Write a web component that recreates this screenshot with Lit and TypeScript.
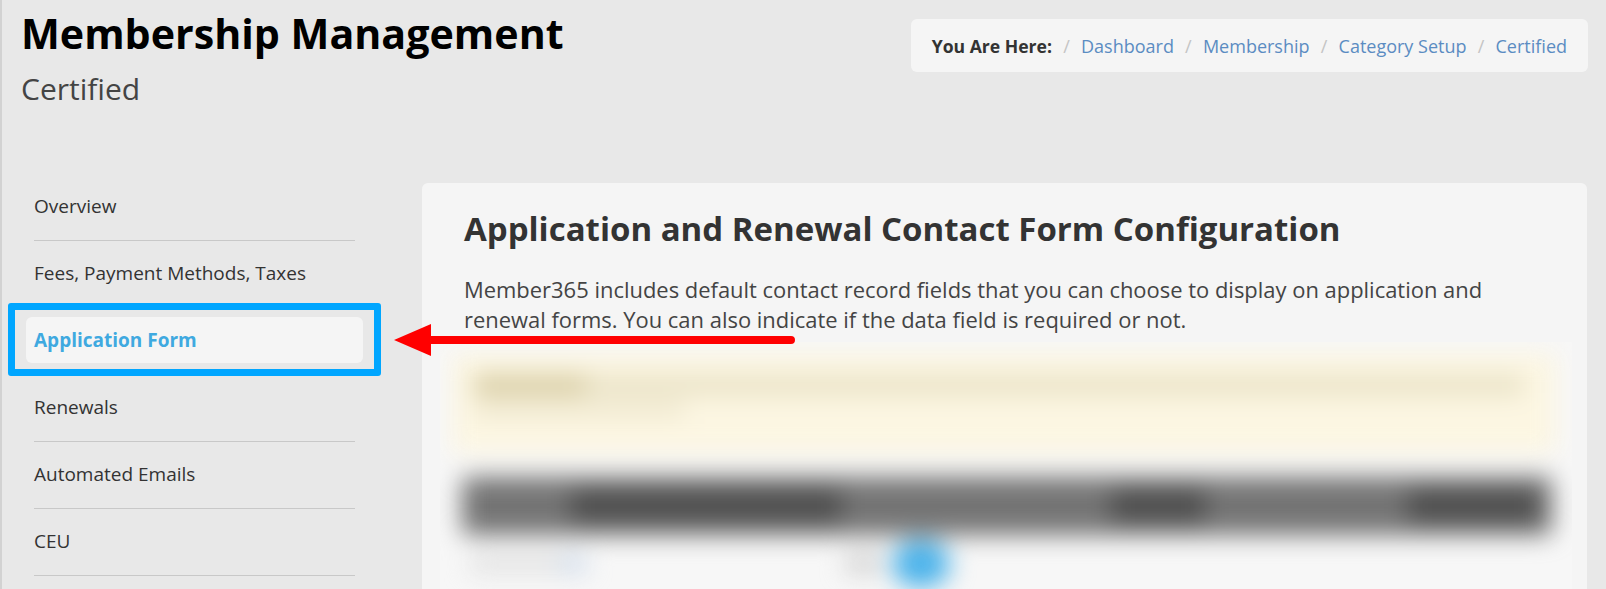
import { LitElement, html, css, svg } from "lit";
import { customElement } from "lit/decorators.js";

const NAV = ["Overview", "Fees, Payment Methods, Taxes", "Application Form", "Renewals", "Automated Emails", "CEU"];
const CRUMBS = ["Dashboard", "Membership", "Category Setup", "Certified"];

@customElement("app-root")
export class AppRoot extends LitElement {
  static styles = css`
    :host {
      display: block;
      position: relative;
      width: 1606px;
      height: 589px;
      overflow: hidden;
      box-sizing: border-box;
      background: #e8e8e8;
      border-left: 2px solid #d2d2d2;
      font-family: "Open Sans", "Noto Sans", sans-serif;
      color: #333;
    }
    .header {
      display: flex;
      justify-content: space-between;
      align-items: flex-start;
      height: 174px;
      padding: 0 18px 0 19px;
      box-sizing: border-box;
    }
    h1 {
      margin: 5px 0 0;
      font-size: 41.2px;
      line-height: 57px;
      font-weight: 700;
      color: #000;
    }
    .sub {
      margin: 6px 0 0;
      font-size: 30px;
      line-height: 41px;
      font-weight: 400;
      color: #444;
    }
    .crumbs {
      display: flex;
      align-items: center;
      margin-top: 19px;
      height: 53px;
      padding: 0 21px;
      background: #f5f5f5;
      border-radius: 6px;
      font-size: 18px;
    }
    .crumbs b { font-weight: 700; font-size: 17.6px; color: #333; }
    .crumbs a { color: #5b8cc2; }
    .crumbs i { font-style: normal; color: #c4c4c4; width: 29px; text-align: center; }
    .body { display: flex; align-items: flex-start; }
    .nav { width: 420px; flex: none; box-sizing: border-box; padding: 0 67px 0 32px; }
    .nav div {
      height: 67px;
      box-sizing: border-box;
      display: flex;
      align-items: center;
      font-size: 19px;
      color: #333;
      border-bottom: 1px solid #c8c8c8;
      padding-bottom: 2px;
    }
    .nav div.active {
      margin: 9px -8px 12px;
      height: 46px;
      padding: 0 8px 0;
      border: 0;
      border-radius: 6px;
      background: #f5f5f5;
      color: #3fa9e0;
      font-weight: 700;
    }
    .panel {
      flex: none;
      width: 1165px;
      height: 406px;
      margin-top: 9px;
      overflow: hidden;
      background: #f5f5f5;
      border-radius: 6px 6px 0 0;
      box-sizing: border-box;
      padding-top: 16px;
    }
    .panel h2 {
      margin: 0 0 0 42px;
      font-size: 33px;
      line-height: 60px;
      font-weight: 700;
      color: #333;
    }
    .panel p {
      margin: 16px 40px 0 42px;
      font-size: 21.95px;
      line-height: 29.5px;
      color: #444;
    }
    .blur {
      margin: 8px 0 0 18px;
      width: 1132px;
      height: 260px;
      background: #f7f7f7;
      overflow: hidden;
    }
    .blur-inner { filter: blur(12px); padding: 11px 16px 0 12px; }
    .notice {
      height: 100px;
      background: #fcf6e2;
      box-sizing: border-box;
      padding: 22px 32px 0 22px;
      display: flex;
      flex-direction: column;
      gap: 6px;
    }
    .text-line { height: 20px; background: #e9e2c6; display: flex; }
    .text-line.s { height: 16px; width: 210px; background: #efe8cf; }
    .strong { width: 112px; height: 100%; background: #d6cba2; }
    .bar {
      display: flex;
      margin: 24px 0 0 10px;
      width: 1090px;
      height: 58px;
      background: #747474;
      border-radius: 6px;
      padding: 0 14px 0 0;
      box-sizing: border-box;
    }
    .seg { height: 36px; align-self: center; background: #505050; flex: none; }
    .row { display: flex; align-items: center; margin: 0 0 0 18px; height: 58px; }
    .chip { height: 14px; flex: none; }
    .dot { width: 58px; height: 48px; border-radius: 50%; background: #4ab2ea; flex: none; }
    .box {
      position: absolute;
      left: 6px;
      top: 303px;
      width: 373px;
      height: 73px;
      box-sizing: border-box;
      border: 7px solid #00a6ff;
      border-radius: 3px;
    }
    .arrow { position: absolute; left: 390px; top: 320px; }
  `;

  private arrow() {
    return svg`<path d="M2 20 L39 4 L39 16 L399 16 A4 4 0 0 1 399 24 L39 24 L39 36 Z" fill="#ff0000"/>`;
  }

  render() {
    return html`
      <div class="header">
        <div>
          <h1>Membership Management</h1>
          <div class="sub">Certified</div>
        </div>
        <div class="crumbs">
          <b>You Are Here:</b>
          ${CRUMBS.map((c) => html`<i>/</i><a>${c}</a>`)}
        </div>
      </div>
      <div class="body">
        <div class="nav">
          ${NAV.map((n, i) => html`<div class=${i === 2 ? "active" : ""}>${n}</div>`)}
        </div>
        <div class="panel">
          <h2>Application and Renewal Contact Form Configuration</h2>
          <p>Member365 includes default contact record fields that you can choose to display on application and renewal forms. You can also indicate if the data field is required or not.</p>
          <div class="blur">
            <div class="blur-inner">
              <div class="notice">
                <div class="text-line"><div class="strong"></div></div>
                <div class="text-line s"></div>
              </div>
              <div class="bar">
                <div style="width:110px"></div>
                <div class="seg" style="width:270px"></div>
                <div style="width:272px"></div>
                <div class="seg" style="width:94px"></div>
                <div style="width:205px"></div>
                <div class="seg" style="width:130px"></div>
              </div>
              <div class="row">
                <div class="chip" style="width:90px;background:#dcdcdc"></div>
                <div class="chip" style="width:26px;background:#c4d4e8"></div>
                <div style="width:260px"></div>
                <div class="chip" style="width:34px;background:#c4c4c4"></div>
                <div style="width:12px"></div>
                <div class="dot"></div>
              </div>
            </div>
          </div>
        </div>
      </div>
      <div class="box"></div>
      <svg class="arrow" width="405" height="40" viewBox="0 0 405 40">${this.arrow()}</svg>
    `;
  }
}
